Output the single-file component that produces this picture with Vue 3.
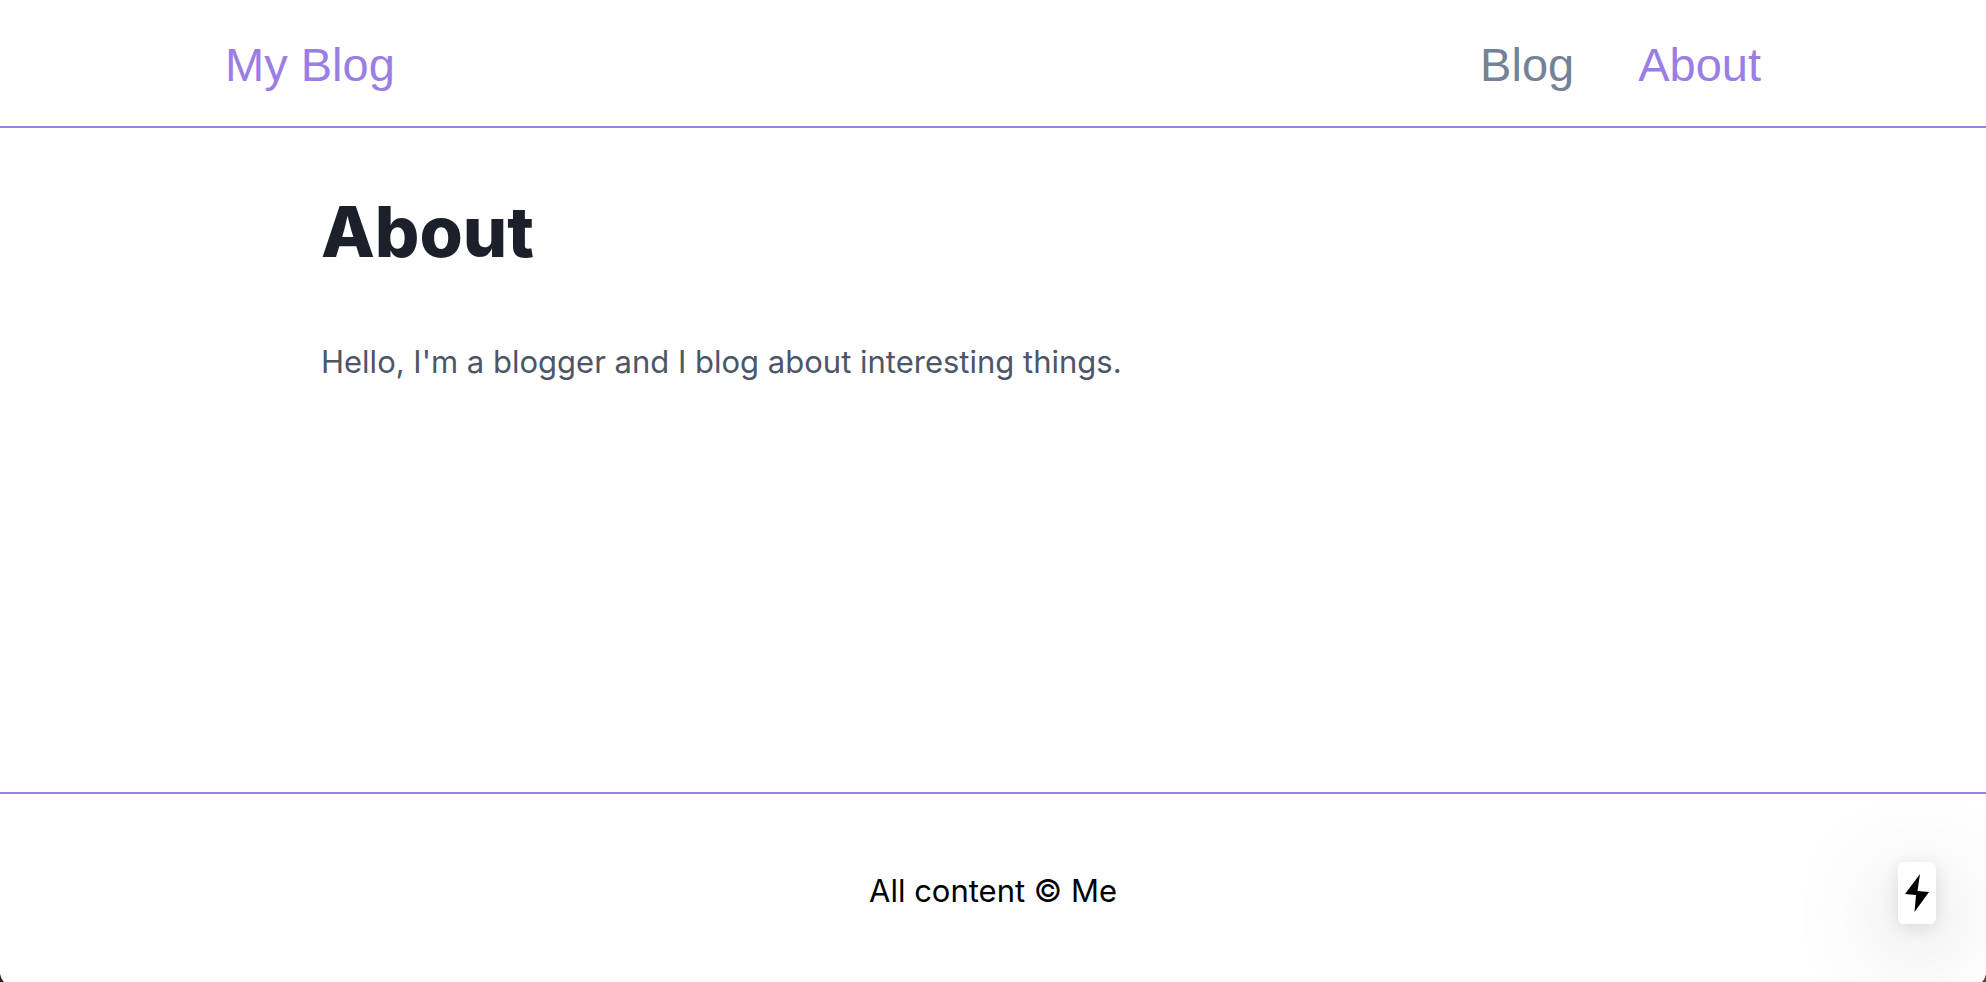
<script setup>
const links = [
  { label: 'Blog', href: '#blog', active: false },
  { label: 'About', href: '#about', active: true },
]
</script>

<template>
  <div class="page">
    <header class="header">
      <div class="bar">
        <a class="link active" href="#home">My Blog</a>
        <nav class="nav">
          <a
            v-for="link in links"
            :key="link.label"
            class="link"
            :class="{ active: link.active }"
            :href="link.href"
          >{{ link.label }}</a>
        </nav>
      </div>
    </header>

    <main class="main">
      <h1 class="title">About</h1>
      <p class="intro">Hello, I'm a blogger and I blog about interesting things.</p>
    </main>

    <footer class="footer">All content © Me</footer>

    <a class="indicator" href="#prerender" aria-label="Prerendered page">
      <svg width="24" height="38" viewBox="0 0 24 38" aria-hidden="true">
        <path d="M15 0 L0 20 L11 21 L9.500 38 L24 18 L12.500 17 Z" fill="#000" />
      </svg>
    </a>
    <svg class="corner left" width="4" height="8" viewBox="0 0 4 8" aria-hidden="true">
      <path d="M0 0 Q1 5 4 8 H0 Z" fill="#222326" />
    </svg>
    <svg class="corner right" width="4" height="8" viewBox="0 0 4 8" aria-hidden="true">
      <path d="M4 0 Q3 5 0 8 H4 Z" fill="#46474b" />
    </svg>
  </div>
</template>

<style>
body {
  margin: 0;
  background: #fff;
}
</style>

<style scoped>
.page {
  position: relative;
  display: flex;
  flex-direction: column;
  min-height: 100vh;
  overflow: hidden;
  font-family: Inter, "Liberation Sans", sans-serif;
  font-size: 31px;
  line-height: 48px;
  color: #000;
}

.header {
  border-bottom: 2px solid #9b7ee3;
}

.bar {
  display: flex;
  justify-content: space-between;
  align-items: center;
  max-width: 1536px;
  margin: 0 auto;
  padding: 29px 0 25px;
}

.nav {
  display: flex;
  gap: 64px;
}

.link {
  font-family: "Liberation Sans", sans-serif;
  font-size: 47px;
  line-height: 72px;
  color: #748296;
  text-decoration: none;
}

.link.active {
  color: #9b7ee3;
}

.main {
  flex: 1;
  box-sizing: border-box;
  width: 100%;
  max-width: 1536px;
  margin: 0 auto;
  padding: 64px 96px;
}

.title {
  margin: 0 0 64px;
  font-size: 70px;
  font-weight: 800;
  line-height: 80px;
  color: #1c202b;
}

.intro {
  margin: 0;
  line-height: 52px;
  color: #4d5668;
}

.footer {
  padding: 73px 0 67px;
  border-top: 2px solid #9b7ee3;
  text-align: center;
}

.indicator {
  position: fixed;
  right: 50px;
  bottom: 58px;
  display: flex;
  justify-content: center;
  align-items: center;
  width: 38px;
  height: 62px;
  border-radius: 6px;
  background: #fff;
  box-shadow: 0 22px 100px rgba(0, 0, 0, 0.3), 0 4px 20px rgba(0, 0, 0, 0.12);
}

.corner {
  position: fixed;
  bottom: 0;
}

.left {
  left: 0;
}

.right {
  right: 0;
}
</style>
